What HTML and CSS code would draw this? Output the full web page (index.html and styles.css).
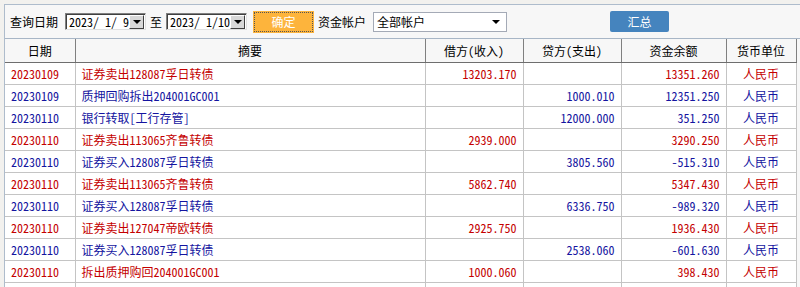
FILE: index.html
```html
<!DOCTYPE html>
<html lang="zh">
<head>
<meta charset="utf-8">
<link rel="stylesheet" href="styles.css">
</head>
<body>
<div class="frame">
  <div class="toolbar">
    <span class="lbl">查询日期</span>
    <span class="date"><span class="dtext">2023/ 1/ 9</span><span class="dbtn"><i class="tri"></i></span></span>
    <span class="lbl to">至</span>
    <span class="date"><span class="dtext">2023/ 1/10</span><span class="dbtn"><i class="tri"></i></span></span>
    <button class="ok">确定</button>
    <span class="lbl acct">资金帐户</span>
    <span class="select"><span>全部帐户</span><i class="tri"></i></span>
    <button class="sum">汇总</button>
  </div>
  <table class="grid">
    <colgroup>
      <col class="c-date"><col class="c-memo"><col class="c-num"><col class="c-num"><col class="c-bal"><col class="c-cur">
    </colgroup>
    <thead>
      <tr><th>日期</th><th>摘要</th><th>借方(收入)</th><th>贷方(支出)</th><th>资金余额</th><th>货币单位</th></tr>
    </thead>
    <tbody>
      <tr class="in"><td>20230109</td><td class="memo">证券卖出128087孚日转债</td><td class="n">13203.170</td><td class="n"></td><td class="n">13351.260</td><td class="cur">人民币</td></tr>
      <tr class="out"><td>20230109</td><td class="memo">质押回购拆出204001GC001</td><td class="n"></td><td class="n">1000.010</td><td class="n">12351.250</td><td class="cur">人民币</td></tr>
      <tr class="out"><td>20230110</td><td class="memo">银行转取[工行存管]</td><td class="n"></td><td class="n">12000.000</td><td class="n">351.250</td><td class="cur">人民币</td></tr>
      <tr class="in"><td>20230110</td><td class="memo">证券卖出113065齐鲁转债</td><td class="n">2939.000</td><td class="n"></td><td class="n">3290.250</td><td class="cur">人民币</td></tr>
      <tr class="out"><td>20230110</td><td class="memo">证券买入128087孚日转债</td><td class="n"></td><td class="n">3805.560</td><td class="n">-515.310</td><td class="cur">人民币</td></tr>
      <tr class="in"><td>20230110</td><td class="memo">证券卖出113065齐鲁转债</td><td class="n">5862.740</td><td class="n"></td><td class="n">5347.430</td><td class="cur">人民币</td></tr>
      <tr class="out"><td>20230110</td><td class="memo">证券买入128087孚日转债</td><td class="n"></td><td class="n">6336.750</td><td class="n">-989.320</td><td class="cur">人民币</td></tr>
      <tr class="in"><td>20230110</td><td class="memo">证券卖出127047帝欧转债</td><td class="n">2925.750</td><td class="n"></td><td class="n">1936.430</td><td class="cur">人民币</td></tr>
      <tr class="out"><td>20230110</td><td class="memo">证券买入128087孚日转债</td><td class="n"></td><td class="n">2538.060</td><td class="n">-601.630</td><td class="cur">人民币</td></tr>
      <tr class="in"><td>20230110</td><td class="memo">拆出质押购回204001GC001</td><td class="n">1000.060</td><td class="n"></td><td class="n">398.430</td><td class="cur">人民币</td></tr>
      <tr class="in"><td>&nbsp;</td><td class="memo"></td><td class="n"></td><td class="n"></td><td class="n"></td><td class="cur"></td></tr>
    </tbody>
  </table>
</div>
</body>
</html>
```
FILE: styles.css
```css
html, body {
  margin: 0;
  padding: 0;
  background: #f2f1ee;
  overflow: hidden;
  height: 287px;
}
body {
  font-family: "Noto Sans CJK SC", "Liberation Sans", sans-serif;
  font-feature-settings: "hwid" 1;
  font-size: 12px;
  color: #000;
}
.frame {
  margin: 4px 0 0 4px;
  border-top: 1px solid #aebccc;
  border-left: 1px solid #aebccc;
  background: #f7f7f7;
}
.toolbar {
  height: 33px;
  display: flex;
  align-items: center;
  padding-left: 5px;
  border-bottom: 1px solid #a8b6c6;
}
.lbl { line-height: 14px; }
.date {
  margin-left: 7px;
  width: 81px;
  height: 17px;
  box-sizing: border-box;
  background: #fff;
  border-top: 1px solid #808080;
  border-left: 1px solid #808080;
  border-right: 1px solid #e0e0e0;
  border-bottom: 1px solid #e0e0e0;
  box-shadow: inset 1px 1px 0 #404040;
  display: flex;
  align-items: center;
  justify-content: space-between;
  padding: 0 1px 0 3px;
}
.dtext { line-height: 14px; white-space: pre; }
.dbtn {
  width: 15px;
  height: 14px;
  box-sizing: border-box;
  background: #d8d8d8;
  border-top: 1px solid #fff;
  border-left: 1px solid #fff;
  border-right: 1px solid #404040;
  border-bottom: 1px solid #404040;
  display: flex;
  align-items: center;
  justify-content: center;
}
.tri {
  display: block;
  width: 0;
  height: 0;
  border-left: 4px solid transparent;
  border-right: 4px solid transparent;
  border-top: 4px solid #000;
}
.to { margin-left: 4px; margin-right: -3px; }
.ok {
  margin-left: 7px;
  width: 59px;
  height: 20px;
  box-sizing: border-box;
  background: #fdb43c;
  border: 1px dotted #555;
  outline: 1px solid #fdb43c;
  color: #fff;
  font: inherit;
  padding: 0;
  line-height: 16px;
}
.acct { margin-left: 5px; }
.select {
  margin-left: 7px;
  width: 134px;
  height: 20px;
  box-sizing: border-box;
  background: #fff;
  border: 1px solid #a4aab6;
  display: flex;
  align-items: center;
  justify-content: space-between;
  padding: 0 6px 0 3px;
  line-height: 16px;
}
.sum {
  margin-left: 103px;
  width: 59px;
  height: 21px;
  background: #4584be;
  border: none;
  border-radius: 2px;
  color: #fff;
  font: inherit;
  padding: 0;
}
.grid {
  border-collapse: collapse;
  table-layout: fixed;
  width: 791px;
}
.c-date { width: 70px; }
.c-memo { width: 350px; }
.c-num { width: 98px; }
.c-bal { width: 105px; }
.c-cur { width: 70px; }
.grid th {
  height: 23px;
  padding: 0;
  font-weight: normal;
  text-align: center;
  background: #f7f7f7;
  border-right: 1px solid #808080;
  border-bottom: 1px solid #6e6e6e;
  line-height: 14px;
}
.grid td {
  height: 21px;
  padding: 0 7px 0 6px;
  background: #fff;
  border-right: 1px solid #c4c4c4;
  border-bottom: 1px solid #c4c4c4;
  white-space: nowrap;
  overflow: hidden;
  line-height: 14px;
}
.grid td.memo { padding-left: 6px; }
.grid td.n { text-align: right; padding-right: 6px; }
.grid td.cur { text-align: center; padding: 0; }
.in td { color: #c40000; }
.out td { color: #1414a0; }
```
